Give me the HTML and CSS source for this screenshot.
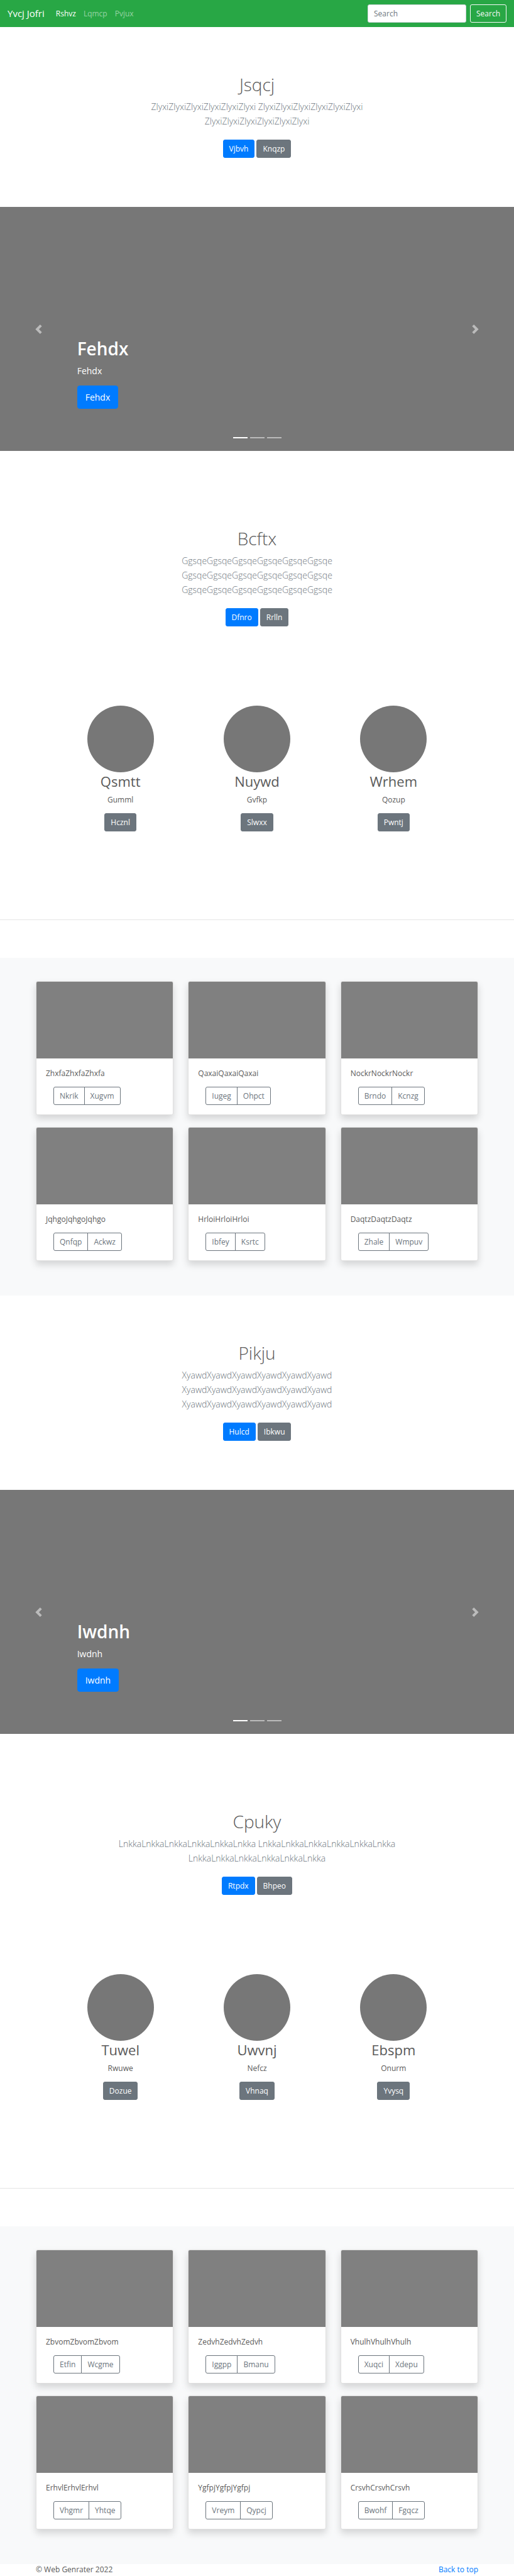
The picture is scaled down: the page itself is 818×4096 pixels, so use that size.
FILE: index.html
```html
<!DOCTYPE html>
<html lang="en">
<head>
<meta charset="utf-8">
<meta name="viewport" content="width=device-width, initial-scale=1">
<title>Yvcj Jofri</title>
<link rel="stylesheet" href="styles.css">
</head>
<body id="top">
<header class="navbar">
  <a class="brand" href="#">Yvcj Jofri</a>
  <nav class="nav">
    <a class="nav-link active" href="#">Rshvz</a>
    <a class="nav-link" href="#">Lqmcp</a>
    <a class="nav-link" href="#">Pvjux</a>
  </nav>
  <form class="search">
    <input class="search-input" type="search" placeholder="Search" aria-label="Search">
    <button class="btn btn-outline-light" type="button">Search</button>
  </form>
</header>

<main>
  <section class="hero">
    <h1 class="hero-title">Jsqcj</h1>
    <p class="lead">ZlyxiZlyxiZlyxiZlyxiZlyxiZlyxi ZlyxiZlyxiZlyxiZlyxiZlyxiZlyxi ZlyxiZlyxiZlyxiZlyxiZlyxiZlyxi</p>
    <div class="actions">
      <a class="btn btn-primary" href="#">Vjbvh</a>
      <a class="btn btn-secondary" href="#">Knqzp</a>
    </div>
  </section>

  <section class="carousel">
    <div class="caption">
      <h2 class="caption-title">Fehdx</h2>
      <p class="caption-text">Fehdx</p>
      <a class="btn btn-primary btn-lg" href="#">Fehdx</a>
    </div>
    <button class="control control-prev" type="button" aria-label="Previous">
      <svg class="chevron" viewBox="0 0 8 8"><path d="M5.25 0l-4 4 4 4 1.5-1.5L4.25 4l2.5-2.5L5.25 0z"/></svg>
    </button>
    <button class="control control-next" type="button" aria-label="Next">
      <svg class="chevron" viewBox="0 0 8 8"><path d="M2.75 0l-1.5 1.5L3.75 4l-2.5 2.5L2.75 8l4-4-4-4z"/></svg>
    </button>
    <div class="indicators"><span class="dot current"></span><span class="dot"></span><span class="dot"></span></div>
  </section>

  <section class="hero">
    <h1 class="hero-title">Bcftx</h1>
    <p class="lead">GgsqeGgsqeGgsqeGgsqeGgsqeGgsqe GgsqeGgsqeGgsqeGgsqeGgsqeGgsqe GgsqeGgsqeGgsqeGgsqeGgsqeGgsqe</p>
    <div class="actions">
      <a class="btn btn-primary" href="#">Dfnro</a>
      <a class="btn btn-secondary" href="#">Rrlln</a>
    </div>
  </section>

  <section class="people">
    <div class="person">
      <div class="avatar"></div>
      <h2 class="person-name">Qsmtt</h2>
      <p class="person-text">Gumml</p>
      <a class="btn btn-secondary" href="#">Hcznl</a>
    </div>
    <div class="person">
      <div class="avatar"></div>
      <h2 class="person-name">Nuywd</h2>
      <p class="person-text">Gvfkp</p>
      <a class="btn btn-secondary" href="#">Slwxx</a>
    </div>
    <div class="person">
      <div class="avatar"></div>
      <h2 class="person-name">Wrhem</h2>
      <p class="person-text">Qozup</p>
      <a class="btn btn-secondary" href="#">Pwntj</a>
    </div>
  </section>
  <hr class="divider">

  <section class="album">
    <div class="cards">
      <article class="card">
        <div class="card-image"></div>
        <div class="card-body">
          <p class="card-text">ZhxfaZhxfaZhxfa</p>
          <div class="btn-group"><button class="btn btn-outline" type="button">Nkrik</button><button class="btn btn-outline" type="button">Xugvm</button></div>
        </div>
      </article>
      <article class="card">
        <div class="card-image"></div>
        <div class="card-body">
          <p class="card-text">QaxaiQaxaiQaxai</p>
          <div class="btn-group"><button class="btn btn-outline" type="button">Iugeg</button><button class="btn btn-outline" type="button">Ohpct</button></div>
        </div>
      </article>
      <article class="card">
        <div class="card-image"></div>
        <div class="card-body">
          <p class="card-text">NockrNockrNockr</p>
          <div class="btn-group"><button class="btn btn-outline" type="button">Brndo</button><button class="btn btn-outline" type="button">Kcnzg</button></div>
        </div>
      </article>
      <article class="card">
        <div class="card-image"></div>
        <div class="card-body">
          <p class="card-text">JqhgoJqhgoJqhgo</p>
          <div class="btn-group"><button class="btn btn-outline" type="button">Qnfqp</button><button class="btn btn-outline" type="button">Ackwz</button></div>
        </div>
      </article>
      <article class="card">
        <div class="card-image"></div>
        <div class="card-body">
          <p class="card-text">HrloiHrloiHrloi</p>
          <div class="btn-group"><button class="btn btn-outline" type="button">Ibfey</button><button class="btn btn-outline" type="button">Ksrtc</button></div>
        </div>
      </article>
      <article class="card">
        <div class="card-image"></div>
        <div class="card-body">
          <p class="card-text">DaqtzDaqtzDaqtz</p>
          <div class="btn-group"><button class="btn btn-outline" type="button">Zhale</button><button class="btn btn-outline" type="button">Wmpuv</button></div>
        </div>
      </article>
    </div>
  </section>

  <section class="hero">
    <h1 class="hero-title">Pikju</h1>
    <p class="lead">XyawdXyawdXyawdXyawdXyawdXyawd XyawdXyawdXyawdXyawdXyawdXyawd XyawdXyawdXyawdXyawdXyawdXyawd</p>
    <div class="actions">
      <a class="btn btn-primary" href="#">Hulcd</a>
      <a class="btn btn-secondary" href="#">Ibkwu</a>
    </div>
  </section>

  <section class="carousel">
    <div class="caption">
      <h2 class="caption-title">Iwdnh</h2>
      <p class="caption-text">Iwdnh</p>
      <a class="btn btn-primary btn-lg" href="#">Iwdnh</a>
    </div>
    <button class="control control-prev" type="button" aria-label="Previous">
      <svg class="chevron" viewBox="0 0 8 8"><path d="M5.25 0l-4 4 4 4 1.5-1.5L4.25 4l2.5-2.5L5.25 0z"/></svg>
    </button>
    <button class="control control-next" type="button" aria-label="Next">
      <svg class="chevron" viewBox="0 0 8 8"><path d="M2.75 0l-1.5 1.5L3.75 4l-2.5 2.5L2.75 8l4-4-4-4z"/></svg>
    </button>
    <div class="indicators"><span class="dot current"></span><span class="dot"></span><span class="dot"></span></div>
  </section>

  <section class="hero">
    <h1 class="hero-title">Cpuky</h1>
    <p class="lead">LnkkaLnkkaLnkkaLnkkaLnkkaLnkka LnkkaLnkkaLnkkaLnkkaLnkkaLnkka LnkkaLnkkaLnkkaLnkkaLnkkaLnkka</p>
    <div class="actions">
      <a class="btn btn-primary" href="#">Rtpdx</a>
      <a class="btn btn-secondary" href="#">Bhpeo</a>
    </div>
  </section>

  <section class="people">
    <div class="person">
      <div class="avatar"></div>
      <h2 class="person-name">Tuwel</h2>
      <p class="person-text">Rwuwe</p>
      <a class="btn btn-secondary" href="#">Dozue</a>
    </div>
    <div class="person">
      <div class="avatar"></div>
      <h2 class="person-name">Uwvnj</h2>
      <p class="person-text">Nefcz</p>
      <a class="btn btn-secondary" href="#">Vhnaq</a>
    </div>
    <div class="person">
      <div class="avatar"></div>
      <h2 class="person-name">Ebspm</h2>
      <p class="person-text">Onurm</p>
      <a class="btn btn-secondary" href="#">Yvysq</a>
    </div>
  </section>
  <hr class="divider">

  <section class="album">
    <div class="cards">
      <article class="card">
        <div class="card-image"></div>
        <div class="card-body">
          <p class="card-text">ZbvomZbvomZbvom</p>
          <div class="btn-group"><button class="btn btn-outline" type="button">Etfin</button><button class="btn btn-outline" type="button">Wcgme</button></div>
        </div>
      </article>
      <article class="card">
        <div class="card-image"></div>
        <div class="card-body">
          <p class="card-text">ZedvhZedvhZedvh</p>
          <div class="btn-group"><button class="btn btn-outline" type="button">Iggpp</button><button class="btn btn-outline" type="button">Bmanu</button></div>
        </div>
      </article>
      <article class="card">
        <div class="card-image"></div>
        <div class="card-body">
          <p class="card-text">VhulhVhulhVhulh</p>
          <div class="btn-group"><button class="btn btn-outline" type="button">Xuqci</button><button class="btn btn-outline" type="button">Xdepu</button></div>
        </div>
      </article>
      <article class="card">
        <div class="card-image"></div>
        <div class="card-body">
          <p class="card-text">ErhvlErhvlErhvl</p>
          <div class="btn-group"><button class="btn btn-outline" type="button">Vhgmr</button><button class="btn btn-outline" type="button">Yhtqe</button></div>
        </div>
      </article>
      <article class="card">
        <div class="card-image"></div>
        <div class="card-body">
          <p class="card-text">YgfpjYgfpjYgfpj</p>
          <div class="btn-group"><button class="btn btn-outline" type="button">Vreym</button><button class="btn btn-outline" type="button">Qypcj</button></div>
        </div>
      </article>
      <article class="card">
        <div class="card-image"></div>
        <div class="card-body">
          <p class="card-text">CrsvhCrsvhCrsvh</p>
          <div class="btn-group"><button class="btn btn-outline" type="button">Bwohf</button><button class="btn btn-outline" type="button">Fgqcz</button></div>
        </div>
      </article>
    </div>
  </section>
</main>

<footer class="footer">
  <span>© Web Genrater 2022</span>
  <a class="footer-link" href="#top">Back to top</a>
</footer>
</body>
</html>
```
FILE: styles.css
```css
* {
  box-sizing: border-box;
}

body {
  margin: 0;
  background: #fff;
  color: #5a5a5a;
  font-family: "Segoe UI", "Open Sans", "Noto Sans", sans-serif;
  font-size: 12px;
  line-height: 18px;
}

h1,
h2,
p {
  margin: 0;
}

a {
  text-decoration: none;
}

/* Buttons */
.btn {
  display: inline-block;
  padding: 5px 9px 4px;
  border: 1px solid transparent;
  border-radius: 3px;
  background: transparent;
  font: inherit;
  text-align: center;
}

.btn-primary {
  border-color: #007bff;
  background: #007bff;
  color: #fff;
}

.btn-secondary {
  border-color: #6c757d;
  background: #6c757d;
  color: #fff;
}

.btn-outline-light {
  border-color: #f8f9fa;
  color: #f8f9fa;
}

.btn-outline {
  border-color: #6c757d;
  color: #6c757d;
}

.btn-lg {
  padding: 6px 12px;
  border-radius: 4px;
  font-size: 14px;
  line-height: 23px;
}

.btn-group {
  display: flex;
  padding-left: 12px;
}

.btn-group .btn:first-child {
  border-radius: 3px 0 0 3px;
}

.btn-group .btn:last-child {
  margin-left: -1px;
  border-radius: 0 3px 3px 0;
}

/* Top bar */
.navbar {
  display: flex;
  align-items: center;
  padding: 7px 12px;
  background: #28a745;
}

.brand {
  margin-right: 12px;
  color: #fff;
  font-size: 15px;
  line-height: 23px;
}

.nav {
  display: flex;
}

.nav-link {
  padding: 0 6px;
  color: rgba(255, 255, 255, 0.5);
}

.nav-link.active {
  color: #fff;
}

.search {
  display: flex;
  gap: 6px;
  margin-left: auto;
}

.search-input {
  width: 157px;
  padding: 5px 9px 4px;
  border: 1px solid #ced4da;
  border-radius: 3px;
  background: #fff;
  color: #495057;
  font: inherit;
  appearance: none;
}

.search-input::placeholder {
  color: #6c757d;
  opacity: 1;
}

/* Centered intro */
.hero {
  max-width: 470px;
  margin: 0 auto;
  padding: 73px 0 78px;
  text-align: center;
}

.hero-title {
  margin-bottom: 6px;
  font-size: 28px;
  font-weight: 300;
  line-height: 36px;
}

.lead {
  margin-bottom: 18px;
  color: #6c757d;
  font-size: 14px;
  font-weight: 300;
  line-height: 23px;
}

.actions {
  display: flex;
  justify-content: center;
  gap: 3px;
}

/* Carousel */
.carousel {
  position: relative;
  display: flex;
  flex-direction: column;
  justify-content: flex-end;
  min-height: 388px;
  margin-bottom: 48px;
  padding: 0 15% 67px;
  background: #777;
  color: #fff;
}

.caption-title {
  margin-bottom: 6px;
  font-size: 28px;
  font-weight: 600;
  line-height: 36px;
}

.caption-text {
  margin-bottom: 12px;
  font-size: 14px;
  line-height: 23px;
}

.control {
  position: absolute;
  top: 0;
  bottom: 0;
  display: flex;
  align-items: center;
  justify-content: center;
  width: 15%;
  padding: 0;
  border: 0;
  background: none;
  opacity: 0.5;
}

.control-prev {
  left: 0;
}

.control-next {
  right: 0;
}

.chevron {
  width: 15px;
  height: 15px;
  fill: #fff;
}

.indicators {
  position: absolute;
  right: 0;
  bottom: 20px;
  left: 0;
  display: flex;
  justify-content: center;
  gap: 4px;
}

.dot {
  width: 23px;
  height: 2px;
  background: #fff;
  opacity: 0.5;
}

.dot.current {
  opacity: 1;
}

/* People */
.people {
  display: grid;
  grid-template-columns: repeat(3, 1fr);
  max-width: 652px;
  margin: 0 auto;
  padding: 48px 0 140px;
  text-align: center;
}

.avatar {
  width: 106px;
  height: 106px;
  margin: 0 auto;
  border-radius: 50%;
  background: #777;
}

.person-name {
  margin-bottom: 6px;
  font-size: 22px;
  font-weight: 400;
  line-height: 29px;
}

.person-text {
  margin-bottom: 12px;
}

.divider {
  height: 1px;
  margin: 0 0 60px;
  border: 0;
  background: #e5e5e5;
}

/* Cards */
.album {
  padding: 37px 57px 55px;
  background: #f8f9fa;
}

.cards {
  display: grid;
  grid-template-columns: repeat(3, 1fr);
  gap: 19px 23px;
  max-width: 704px;
  margin: 0 auto;
}

.card {
  overflow: hidden;
  border: 1px solid #dfdfdf;
  border-radius: 3px;
  background: #fff;
  box-shadow: 0 6px 12px rgba(0, 0, 0, 0.15);
}

.card-image {
  height: 122px;
  background: #808080;
}

.card-body {
  padding: 15px;
}

.card-text {
  margin-bottom: 12px;
}

/* Footer */
.footer {
  display: flex;
  justify-content: space-between;
  max-width: 704px;
  margin: 0 auto;
}

.footer-link {
  color: #007bff;
}
```
